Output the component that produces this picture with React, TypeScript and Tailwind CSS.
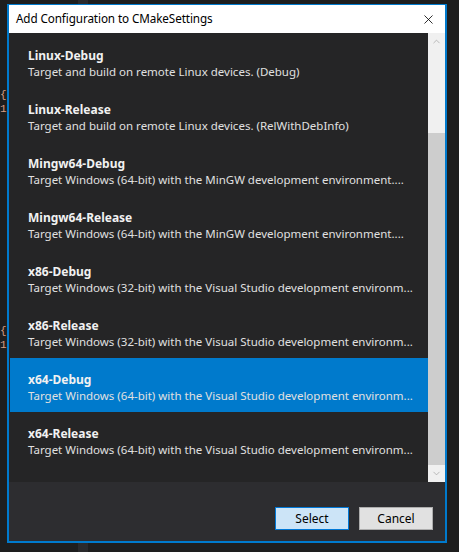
import { X, ChevronUp, ChevronDown } from 'lucide-react';

const configs = [
  { name: 'Linux-Debug', desc: 'Target and build on remote Linux devices. (Debug)' },
  { name: 'Linux-Release', desc: 'Target and build on remote Linux devices. (RelWithDebInfo)' },
  { name: 'Mingw64-Debug', desc: 'Target Windows (64-bit) with the MinGW development environment....' },
  { name: 'Mingw64-Release', desc: 'Target Windows (64-bit) with the MinGW development environment....' },
  { name: 'x86-Debug', desc: 'Target Windows (32-bit) with the Visual Studio development environm...' },
  { name: 'x86-Release', desc: 'Target Windows (32-bit) with the Visual Studio development environm...' },
  { name: 'x64-Debug', desc: 'Target Windows (64-bit) with the Visual Studio development environm...' },
  { name: 'x64-Release', desc: 'Target Windows (64-bit) with the Visual Studio development environm...' },
];

const font = { fontFamily: '"Noto Sans", "Open Sans", sans-serif' };

export default function App() {
  const selected = 'x64-Debug';

  return (
    <div className="relative w-[459px] h-[552px] overflow-hidden bg-[#1e1e1e]" style={font}>
      {/* editor behind the dialog */}
      <div className="absolute left-[78px] top-0 w-[10px] h-[552px] bg-[#2a2a2c]" />
      <div className="absolute left-0 top-[88px] text-[11px] leading-[14px] text-[#d69d85] font-mono">
        <div>{'{'}</div>
        <div>1'</div>
      </div>
      <div className="absolute left-0 top-[324px] text-[11px] leading-[14px] text-[#d69d85] font-mono">
        <div>{'{'}</div>
        <div>1'</div>
      </div>

      <div className="absolute left-[7px] top-[4px] w-[440px] h-[539px] flex flex-col border-x-2 border-b-2 border-t border-[#007acc] bg-[#252526]">
        {/* title bar */}
        <div className="h-[28px] shrink-0 bg-white flex items-center justify-between pl-[7px] pr-[9px]">
          <span className="text-[11.7px] text-black tracking-[-0.1px]">Add Configuration to CMakeSettings</span>
          <X className="w-[15px] h-[15px] text-black" strokeWidth={1.3} />
        </div>

        {/* list + scrollbar */}
        <div className="flex h-[449px] shrink-0">
          <div className="flex-1 pl-[1px] pt-[1px] overflow-hidden">
            {configs.map((c) => {
              const active = c.name === selected;
              return (
                <div
                  key={c.name}
                  className={`h-[54px] pl-[18px] pt-[14px] leading-[16px] ${active ? 'bg-[#007acc]' : ''}`}
                >
                  <div className="text-[12px] font-bold text-[#f1f1f1] whitespace-nowrap">{c.name}</div>
                  <div className="text-[11.5px] text-[#e0e0e0] whitespace-nowrap">{c.desc}</div>
                </div>
              );
            })}
          </div>
          <div className="w-[17px] shrink-0 bg-[#f0f0f0] flex flex-col">
            <div className="h-[17px] flex items-center justify-center">
              <ChevronUp className="w-[11px] h-[11px] text-[#a0a0a0]" strokeWidth={1.5} />
            </div>
            <div className="h-[83px]" />
            <div className="flex-1 bg-[#cdcdcd]" />
            <div className="h-[17px] flex items-center justify-center">
              <ChevronDown className="w-[11px] h-[11px] text-[#a0a0a0]" strokeWidth={1.5} />
            </div>
          </div>
        </div>

        {/* footer */}
        <div className="flex-1 bg-[#2d2d30] flex justify-end items-start pt-[25px] pr-[12px] gap-[10px]">
          <button className="w-[74px] h-[23px] bg-[#cce4f7] border border-[#0078d7] text-[12px] text-black">
            Select
          </button>
          <button className="w-[74px] h-[23px] bg-[#e1e1e1] border border-[#adadad] text-[12px] text-black">
            Cancel
          </button>
        </div>
      </div>
    </div>
  );
}
